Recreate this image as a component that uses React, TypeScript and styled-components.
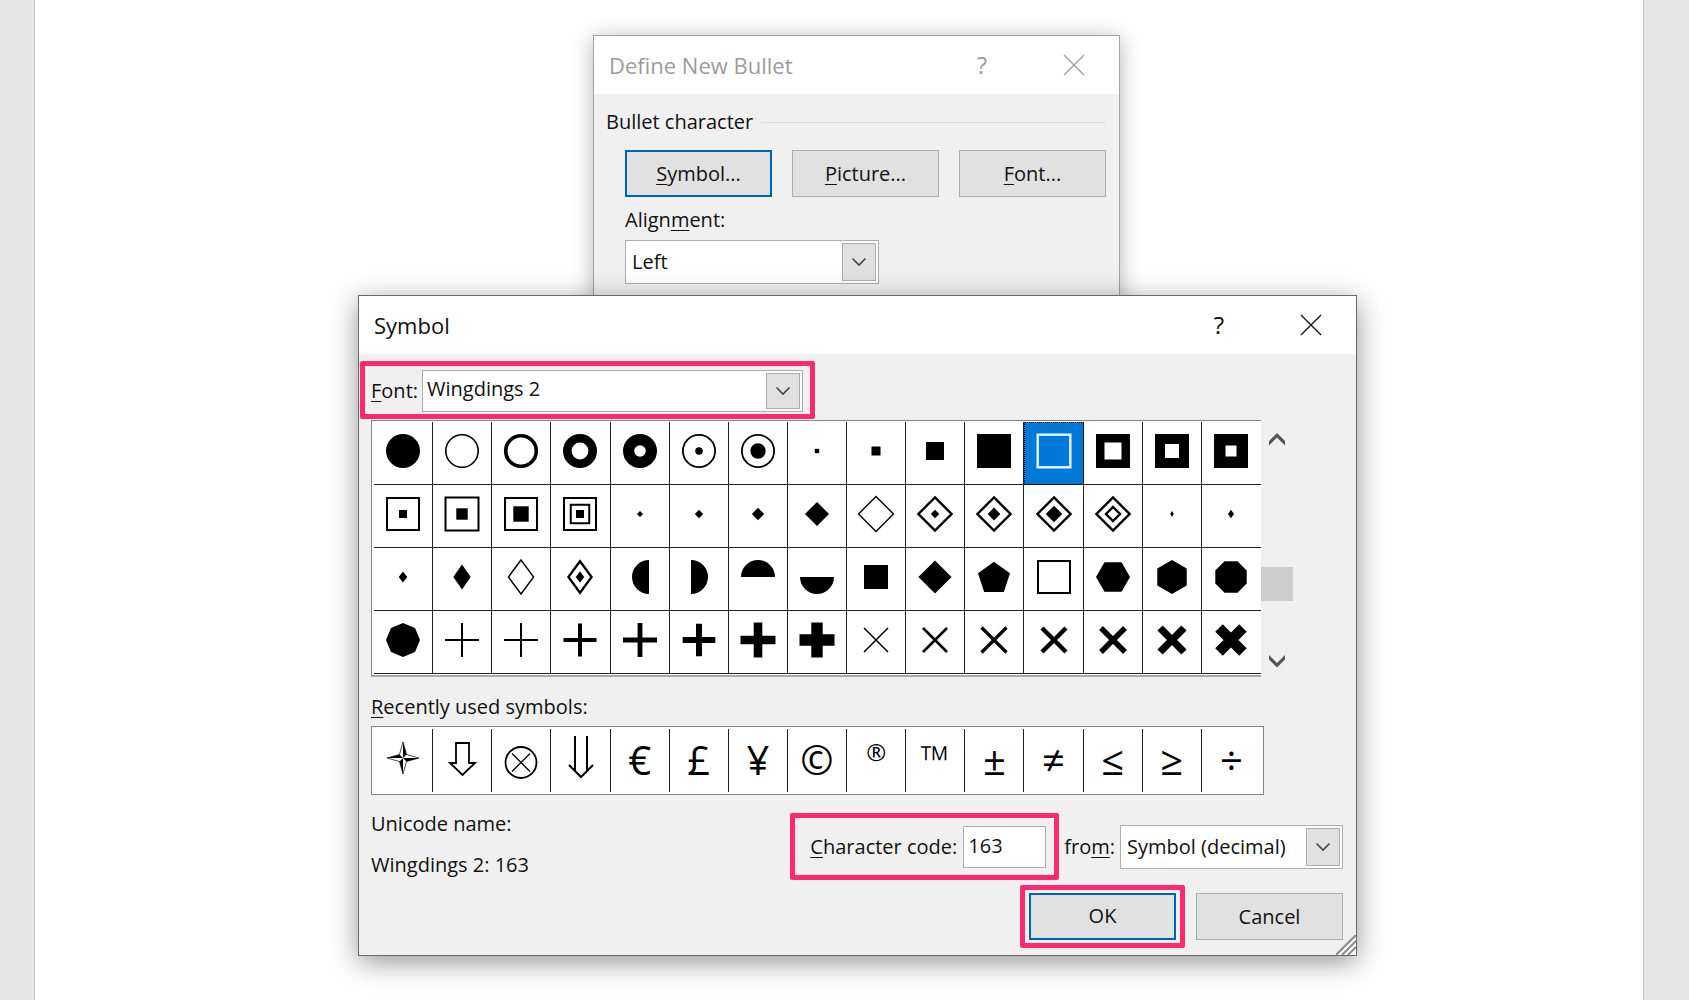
import React, { useId, useState } from "react";
import styled, { createGlobalStyle, css } from "styled-components";

const ink = "#111";
const face = "#f0f0f0";
const edge = "#adadad";
const accent = "#0063b1";
const marker = "#ff2a6d";

const GlobalStyle = createGlobalStyle`
  *, *::before, *::after { box-sizing: border-box; }
  body {
    margin: 0;
    background: #e6e6e6;
    color: ${ink};
    font-family: "Open Sans", "Noto Sans", sans-serif;
    font-size: 20px;
    line-height: 28px;
  }
  button, input, select { font: inherit; color: inherit; }
`;

const Desktop = styled.main`
  position: relative;
  display: flex;
  min-height: 100vh;
  padding: 0 45px 0 34px;
  overflow: hidden;
`;

const Paper = styled.div`
  flex: 1;
  background: #fff;
  border: solid #c6c6c6;
  border-width: 0 1px;
`;

const Dialog = styled.section<{ $inactive?: boolean }>`
  position: absolute;
  background: ${face};
  border: 1px solid ${(p) => (p.$inactive ? "#a3a3a3" : "#6a6a6a")};
  box-shadow: ${(p) =>
    p.$inactive ? "0 3px 20px rgba(0, 0, 0, 0.3)" : "0 6px 26px rgba(0, 0, 0, 0.42)"};
`;

const BulletDialog = styled(Dialog)`
  left: 593px;
  top: 35px;
  width: 527px;
  height: 420px;
`;

const SymbolDialog = styled(Dialog)`
  left: 358px;
  top: 295px;
  width: 999px;
`;

const TitleBar = styled.header<{ $inactive?: boolean }>`
  display: flex;
  align-items: center;
  height: 58px;
  padding: 0 34px 0 15px;
  background: #fff;
  color: ${(p) => (p.$inactive ? "#9c9c9c" : ink)};
`;

const Title = styled.h1`
  flex: 1;
  margin: 0;
  font-size: 22px;
  font-weight: 400;
`;

const TitleButton = styled.button`
  display: grid;
  place-items: center;
  width: 22px;
  height: 30px;
  margin-left: 70px;
  padding: 0;
  border: 0;
  background: none;
  font-size: 24px;
`;

const Key = styled.u`
  text-decoration-thickness: 1px;
  text-underline-offset: 3px;
`;

const BulletBody = styled.div`
  padding: 14px 13px 0 12px;
`;

const GroupHeading = styled.h2`
  display: flex;
  align-items: center;
  gap: 8px;
  margin: 0;
  font-size: 20px;
  font-weight: 400;

  &::after {
    content: "";
    flex: 1;
    border-top: 1px solid #dcdcdc;
  }
`;

const GroupContent = styled.div`
  padding: 14px 0 0 19px;
`;

const ButtonRow = styled.div`
  display: flex;
  gap: 20px;
`;

const PushButton = styled.button<{ $primary?: boolean }>`
  width: 147px;
  height: 47px;
  padding: 0;
  background: #e1e1e1;
  border: 1px solid ${edge};
  ${(p) =>
    p.$primary &&
    css`
      border: 2px solid ${accent};
      box-shadow: inset 0 0 0 1px #cfe6f8;
    `}
`;

const FieldLabel = styled.label`
  white-space: nowrap;
`;

const StackedLabel = styled(FieldLabel)`
  display: block;
  margin: 9px 0 6px;
`;

const SelectFrame = styled.div<{ $width?: number; $height: number }>`
  position: relative;
  width: ${(p) => (p.$width ? `${p.$width}px` : "auto")};
  flex: ${(p) => (p.$width ? "none" : "1")};
  height: ${(p) => p.$height}px;
`;

const Select = styled.select<{ $tight?: boolean }>`
  appearance: none;
  display: block;
  width: 100%;
  height: 100%;
  padding: ${(p) => (p.$tight ? "0 40px 4px 4px" : "0 40px 0 6px")};
  background: #fff;
  border: 1px solid ${edge};
  border-radius: 0;
`;

const DropArrow = styled.span`
  position: absolute;
  top: 3px;
  right: 3px;
  bottom: 3px;
  width: 34px;
  display: grid;
  place-items: center;
  background: #e1e1e1;
  border: 1px solid ${edge};
  pointer-events: none;
`;

const Marker = styled.div`
  display: flex;
  align-items: center;
  border: 5px solid ${marker};
  border-radius: 2px;
`;

const FontMarker = styled(Marker)`
  width: 455px;
  height: 58px;
  gap: 4px;
  margin: 0 0 1px 1px;
  padding: 1px 7px 0 6px;
`;

const CodeMarker = styled(Marker)`
  height: 67px;
  gap: 6px;
  padding: 1px 8px 0 15px;
`;

const OkMarker = styled(Marker)`
  justify-content: center;
  width: 165px;
  height: 63px;
  padding-bottom: 1px;
`;

const SymbolBody = styled.div`
  padding: 7px 0;
`;

const Inset = styled.div`
  padding: 0 13px 0 12px;
`;

const GridArea = styled.div`
  display: flex;
`;

const SymbolGrid = styled.div`
  display: grid;
  grid-template-columns: repeat(15, 1fr);
  grid-auto-rows: 1fr;
  width: 890px;
  height: 257px;
  padding: 1px 0 1px 2px;
  background: #fff;
  border: 1px solid #858585;
  border-right: 0;
  border-bottom: 2px solid #a8a8a8;
`;

const Cell = styled.button<{ $selected?: boolean }>`
  display: grid;
  place-items: center;
  min-width: 0;
  padding: 0 0 4px;
  border: 0;
  border-right: 1px solid #222;
  border-bottom: 1px solid #222;
  background: none;
  color: #000;

  &:nth-child(15n) { border-right: 0; }

  ${(p) =>
    p.$selected &&
    css`
      background: #0078d7;
      color: #e6f6ff;
      outline: 1px dotted #000;
      outline-offset: -1px;
    `}
`;

const ScrollBar = styled.div`
  display: flex;
  flex-direction: column;
  justify-content: space-between;
  align-items: center;
  width: 32px;
  padding: 8px 0 5px;
`;

const ScrollButton = styled.button`
  display: grid;
  place-items: center;
  width: 32px;
  height: 22px;
  padding: 0;
  border: 0;
  background: none;
`;

const ScrollThumb = styled.div`
  width: 32px;
  height: 34px;
  margin-top: 68px;
  background: #cdcdcd;
`;

const RecentHeading = styled.h2`
  margin: 16px 0 5px;
  font-size: 20px;
  font-weight: 400;
`;

const RecentGrid = styled.div`
  display: grid;
  grid-template-columns: repeat(15, 1fr);
  width: 893px;
  height: 69px;
  padding: 2px 2px 2px 2px;
  background: #fff;
  border: 1px solid #858585;
`;

const RecentCell = styled.button<{ $small?: boolean; $light?: boolean }>`
  display: grid;
  place-items: center;
  min-width: 0;
  padding: ${(p) => (p.$small ? "0 0 18px" : "0 0 2px")};
  border: 0;
  border-right: 1px solid #222;
  background: none;
  color: #000;
  font-size: ${(p) => (p.$small ? 24 : 40)}px;
  font-weight: ${(p) => (p.$light ? 300 : 400)};
  line-height: 40px;

  &:last-child { border-right: 0; }
`;

const Footer = styled.div`
  display: flex;
  justify-content: space-between;
  padding-top: 18px;
`;

const NameBlock = styled.div`
  display: flex;
  flex-direction: column;
  gap: 13px;
  margin-top: -3px;
`;

const NameLine = styled.p`
  margin: 0;
`;

const Actions = styled.div`
  display: flex;
  flex-direction: column;
  gap: 5px;
`;

const ActionRow = styled.div<{ $gap: number }>`
  display: flex;
  align-items: center;
  justify-content: flex-end;
  gap: ${(p) => p.$gap}px;
`;

const CodeInput = styled.input`
  width: 83px;
  height: 42px;
  padding: 0 4px 4px;
  background: #fff;
  border: 1px solid ${edge};
  border-radius: 0;
`;

const Grip = styled.svg`
  position: absolute;
  right: 0;
  bottom: 0;
`;

function Chevron() {
  return (
    <svg width="16" height="10" viewBox="0 0 16 10" fill="none" stroke="#444" strokeWidth="1.6">
      <path d="M1.5 1.5 8 8l6.5-6.5" />
    </svg>
  );
}

function CloseIcon() {
  return (
    <svg width="22" height="22" viewBox="0 0 22 22" fill="none" stroke="currentColor" strokeWidth="1.3">
      <path d="M1 1 21 21M21 1 1 21" />
    </svg>
  );
}

function DropDown({
  id,
  options,
  width,
  height,
  tight,
}: {
  id: string;
  options: string[];
  width?: number;
  height: number;
  tight?: boolean;
}) {
  return (
    <SelectFrame $width={width} $height={height}>
      <Select id={id} $tight={tight}>
        {options.map((o) => (
          <option key={o}>{o}</option>
        ))}
      </Select>
      <DropArrow>
        <Chevron />
      </DropArrow>
    </SelectFrame>
  );
}

const disc = (r: number) => <circle r={r} />;
const ring = (r: number, w: number) => <circle r={r} fill="none" stroke="currentColor" strokeWidth={w} />;
const box = (s: number) => <rect x={-s / 2} y={-s / 2} width={s} height={s} />;
const frame = (s: number, w: number) => (
  <rect
    x={-(s - w) / 2}
    y={-(s - w) / 2}
    width={s - w}
    height={s - w}
    fill="none"
    stroke="currentColor"
    strokeWidth={w}
  />
);
const gem = (rx: number, ry = rx) => <path d={`M0 ${-ry}L${rx} 0 0 ${ry} ${-rx} 0Z`} />;
const gemFrame = (w: number, rx: number, ry = rx) => (
  <path d={`M0 ${-ry}L${rx} 0 0 ${ry} ${-rx} 0Z`} fill="none" stroke="currentColor" strokeWidth={w} />
);
const polygon = (n: number, r: number, turn = 0, dy = 0) => (
  <polygon
    points={Array.from({ length: n }, (_, i) => {
      const a = ((i + turn) * 2 * Math.PI) / n - Math.PI / 2;
      return `${(r * Math.cos(a)).toFixed(2)},${(r * Math.sin(a) + dy).toFixed(2)}`;
    }).join(" ")}
  />
);
const plus = (r: number, w: number) => (
  <path d={`M${-r} 0H${r}M0 ${-r}V${r}`} stroke="currentColor" strokeWidth={w} />
);
const cross = (r: number, w: number) => (
  <path d={`M${-r} ${-r}L${r} ${r}M${r} ${-r}L${-r} ${r}`} stroke="currentColor" strokeWidth={w} />
);

const glyphs: React.ReactNode[] = [
  disc(17),
  ring(16.2, 1.6),
  ring(15.3, 3.6),
  ring(12.7, 8.6),
  ring(11.4, 11.2),
  <>{ring(16.1, 1.8)}{disc(3.8)}</>,
  <>{ring(16.1, 1.8)}{disc(7.7)}</>,
  box(4.4),
  box(9),
  box(18),
  box(34),
  frame(35, 2.4),
  frame(34, 8.5),
  frame(34, 10),
  frame(34, 11.5),

  <>{frame(34, 2)}{box(8)}</>,
  <>{frame(35, 2)}{box(11.4)}</>,
  <>{frame(34, 2)}{box(15.4)}</>,
  <>{frame(34, 2)}{frame(20.5, 2)}{box(8)}</>,
  gem(3),
  gem(4.2),
  gem(6.2),
  gem(12),
  gemFrame(1.4, 17.5),
  <>{gemFrame(2.4, 16.6)}{gem(4.3)}</>,
  <>{gemFrame(2.4, 16.6)}{gem(6.4)}</>,
  <>{gemFrame(2.4, 16.6)}{gem(8.3)}</>,
  <>{gemFrame(2.4, 16.6)}{gemFrame(2.4, 7)}</>,
  gem(1.8, 3),
  gem(3, 4.2),

  gem(4.3, 5.6),
  gem(8.7, 12.4),
  gemFrame(1.4, 12.6, 17),
  <>{gemFrame(2.3, 11.6, 15.8)}{gem(4.2, 5.8)}</>,
  <path d="M9-17A17 17 0 0 0 9 17Z" />,
  <path d="M-8-17A17 17 0 0 1-8 17Z" />,
  <path d="M-17 0A17 17 0 0 1 17 0Z" />,
  <path d="M-17 0A17 17 0 0 0 17 0Z" />,
  box(24),
  gem(16.6),
  polygon(5, 16.8, 0, 1.5),
  frame(34, 2),
  polygon(6, 17, 0.5),
  polygon(6, 17),
  polygon(8, 17, 0.5),

  polygon(8, 17),
  plus(17, 2),
  plus(17, 2),
  plus(16.5, 4),
  plus(17, 4.8),
  plus(16.3, 6),
  plus(17.5, 8.6),
  plus(17.5, 11.4),
  cross(12, 1.5),
  cross(12, 2.6),
  cross(12.5, 3.2),
  cross(12, 4.4),
  cross(12, 5.4),
  cross(12, 7.4),
  cross(12, 10.6),
];

const recents: { glyph: React.ReactNode; small?: boolean; light?: boolean }[] = [
  {
    glyph: (
      <svg width="40" height="44" viewBox="-20 -20 40 44">
        <path
          d="M0-16 3.5-3.5 16 0 3.5 3.5 0 16-3.5 3.5-16 0-3.5-3.5Z"
          fill="#fff"
          stroke="#000"
          strokeWidth="0.7"
        />
        <path d="M0 0V-16L3.5-3.5ZM0 0H16L3.5 3.5ZM0 0V16L-3.5 3.5ZM0 0H-16L-3.5-3.5Z" />
      </svg>
    ),
  },
  {
    glyph: (
      <svg width="36" height="44" viewBox="-18 -22 36 44" fill="none" stroke="#000" strokeWidth="1.8">
        <path d="M-6-17H7V3H13L.5 15-12 3H-6Z" />
      </svg>
    ),
  },
  {
    glyph: (
      <svg width="36" height="44" viewBox="-18 -22 36 44" fill="none" stroke="#000" strokeWidth="1.8">
        <circle cy="2.5" r="15.5" />
        <path d="M-9-6.5 9 11.500M9-6.500-9 11.500" strokeWidth="1.3" />
      </svg>
    ),
  },
  {
    glyph: (
      <svg width="36" height="50" viewBox="-18 -25 36 50" fill="none" stroke="#000" strokeWidth="2">
        <path d="M-5-24V11M7-24V11M-11 5 1 17 13 5" />
      </svg>
    ),
  },
  { glyph: "€" },
  { glyph: "£" },
  { glyph: "¥" },
  { glyph: "©" },
  { glyph: "®", small: true },
  { glyph: "™", light: true },
  { glyph: "±" },
  { glyph: "≠" },
  { glyph: "≤" },
  { glyph: "≥" },
  { glyph: "÷" },
];

export default function App() {
  const id = useId();
  const [selected, setSelected] = useState(11);
  const [code, setCode] = useState("163");

  return (
    <>
      <GlobalStyle />
      <Desktop>
        <Paper />

        <BulletDialog $inactive role="dialog" aria-label="Define New Bullet">
          <TitleBar $inactive>
            <Title>Define New Bullet</Title>
            <TitleButton>?</TitleButton>
            <TitleButton aria-label="Close">
              <CloseIcon />
            </TitleButton>
          </TitleBar>
          <BulletBody>
            <GroupHeading>Bullet character</GroupHeading>
            <GroupContent>
              <ButtonRow>
                <PushButton $primary>
                  <Key>S</Key>ymbol...
                </PushButton>
                <PushButton>
                  <Key>P</Key>icture...
                </PushButton>
                <PushButton>
                  <Key>F</Key>ont...
                </PushButton>
              </ButtonRow>
              <StackedLabel htmlFor={`${id}align`}>
                Align<Key>m</Key>ent:
              </StackedLabel>
              <DropDown id={`${id}align`} options={["Left", "Centered", "Right"]} width={254} height={44} />
            </GroupContent>
          </BulletBody>
        </BulletDialog>

        <SymbolDialog role="dialog" aria-label="Symbol">
          <TitleBar>
            <Title>Symbol</Title>
            <TitleButton>?</TitleButton>
            <TitleButton aria-label="Close">
              <CloseIcon />
            </TitleButton>
          </TitleBar>
          <SymbolBody>
            <FontMarker>
              <FieldLabel htmlFor={`${id}font`}>
                <Key>F</Key>ont:
              </FieldLabel>
              <DropDown id={`${id}font`} options={["Wingdings 2", "Wingdings", "Symbol"]} height={42} tight />
            </FontMarker>
            <Inset>
              <GridArea>
                <SymbolGrid>
                  {glyphs.map((g, i) => (
                    <Cell
                      key={i}
                      $selected={i === selected}
                      aria-pressed={i === selected}
                      onClick={() => setSelected(i)}
                    >
                      <svg width="40" height="40" viewBox="-20 -20 40 40" fill="currentColor">
                        {g}
                      </svg>
                    </Cell>
                  ))}
                </SymbolGrid>
                <ScrollBar>
                  <ScrollButton aria-label="Scroll up">
                    <svg width="16" height="13" viewBox="0 0 16 13" fill="#555">
                      <path d="M8 0 16 8V12.500L8 4.500 0 12.500V8Z" />
                    </svg>
                  </ScrollButton>
                  <ScrollThumb />
                  <ScrollButton aria-label="Scroll down">
                    <svg width="16" height="13" viewBox="0 0 16 13" fill="#555">
                      <path d="M8 12.500 16 4.500V0L8 8 0 0V4.500Z" />
                    </svg>
                  </ScrollButton>
                </ScrollBar>
              </GridArea>

              <RecentHeading>
                <Key>R</Key>ecently used symbols:
              </RecentHeading>
              <RecentGrid>
                {recents.map((r, i) => (
                  <RecentCell key={i} $small={r.small} $light={r.light}>
                    {r.glyph}
                  </RecentCell>
                ))}
              </RecentGrid>

              <Footer>
                <NameBlock>
                  <NameLine>Unicode name:</NameLine>
                  <NameLine>Wingdings 2: 163</NameLine>
                </NameBlock>
                <Actions>
                  <ActionRow $gap={5}>
                    <CodeMarker>
                      <FieldLabel htmlFor={`${id}code`}>
                        <Key>C</Key>haracter code:
                      </FieldLabel>
                      <CodeInput id={`${id}code`} value={code} onChange={(e) => setCode(e.target.value)} />
                    </CodeMarker>
                    <FieldLabel htmlFor={`${id}from`}>
                      fro<Key>m</Key>:
                    </FieldLabel>
                    <DropDown
                      id={`${id}from`}
                      options={["Symbol (decimal)", "Symbol (hex)"]}
                      width={223}
                      height={44}
                    />
                  </ActionRow>
                  <ActionRow $gap={11}>
                    <OkMarker>
                      <PushButton $primary>OK</PushButton>
                    </OkMarker>
                    <PushButton>Cancel</PushButton>
                  </ActionRow>
                </Actions>
              </Footer>
            </Inset>
          </SymbolBody>
          <Grip width="20" height="20" viewBox="0 0 20 20" stroke="#8a8a8a" strokeWidth="2">
            <path d="M0 20 20 0 20 20Z" fill="#fff" stroke="none" />
            <path d="M0 20 20 0M6 20 20 6M12 20 20 12" />
          </Grip>
        </SymbolDialog>
      </Desktop>
    </>
  );
}
